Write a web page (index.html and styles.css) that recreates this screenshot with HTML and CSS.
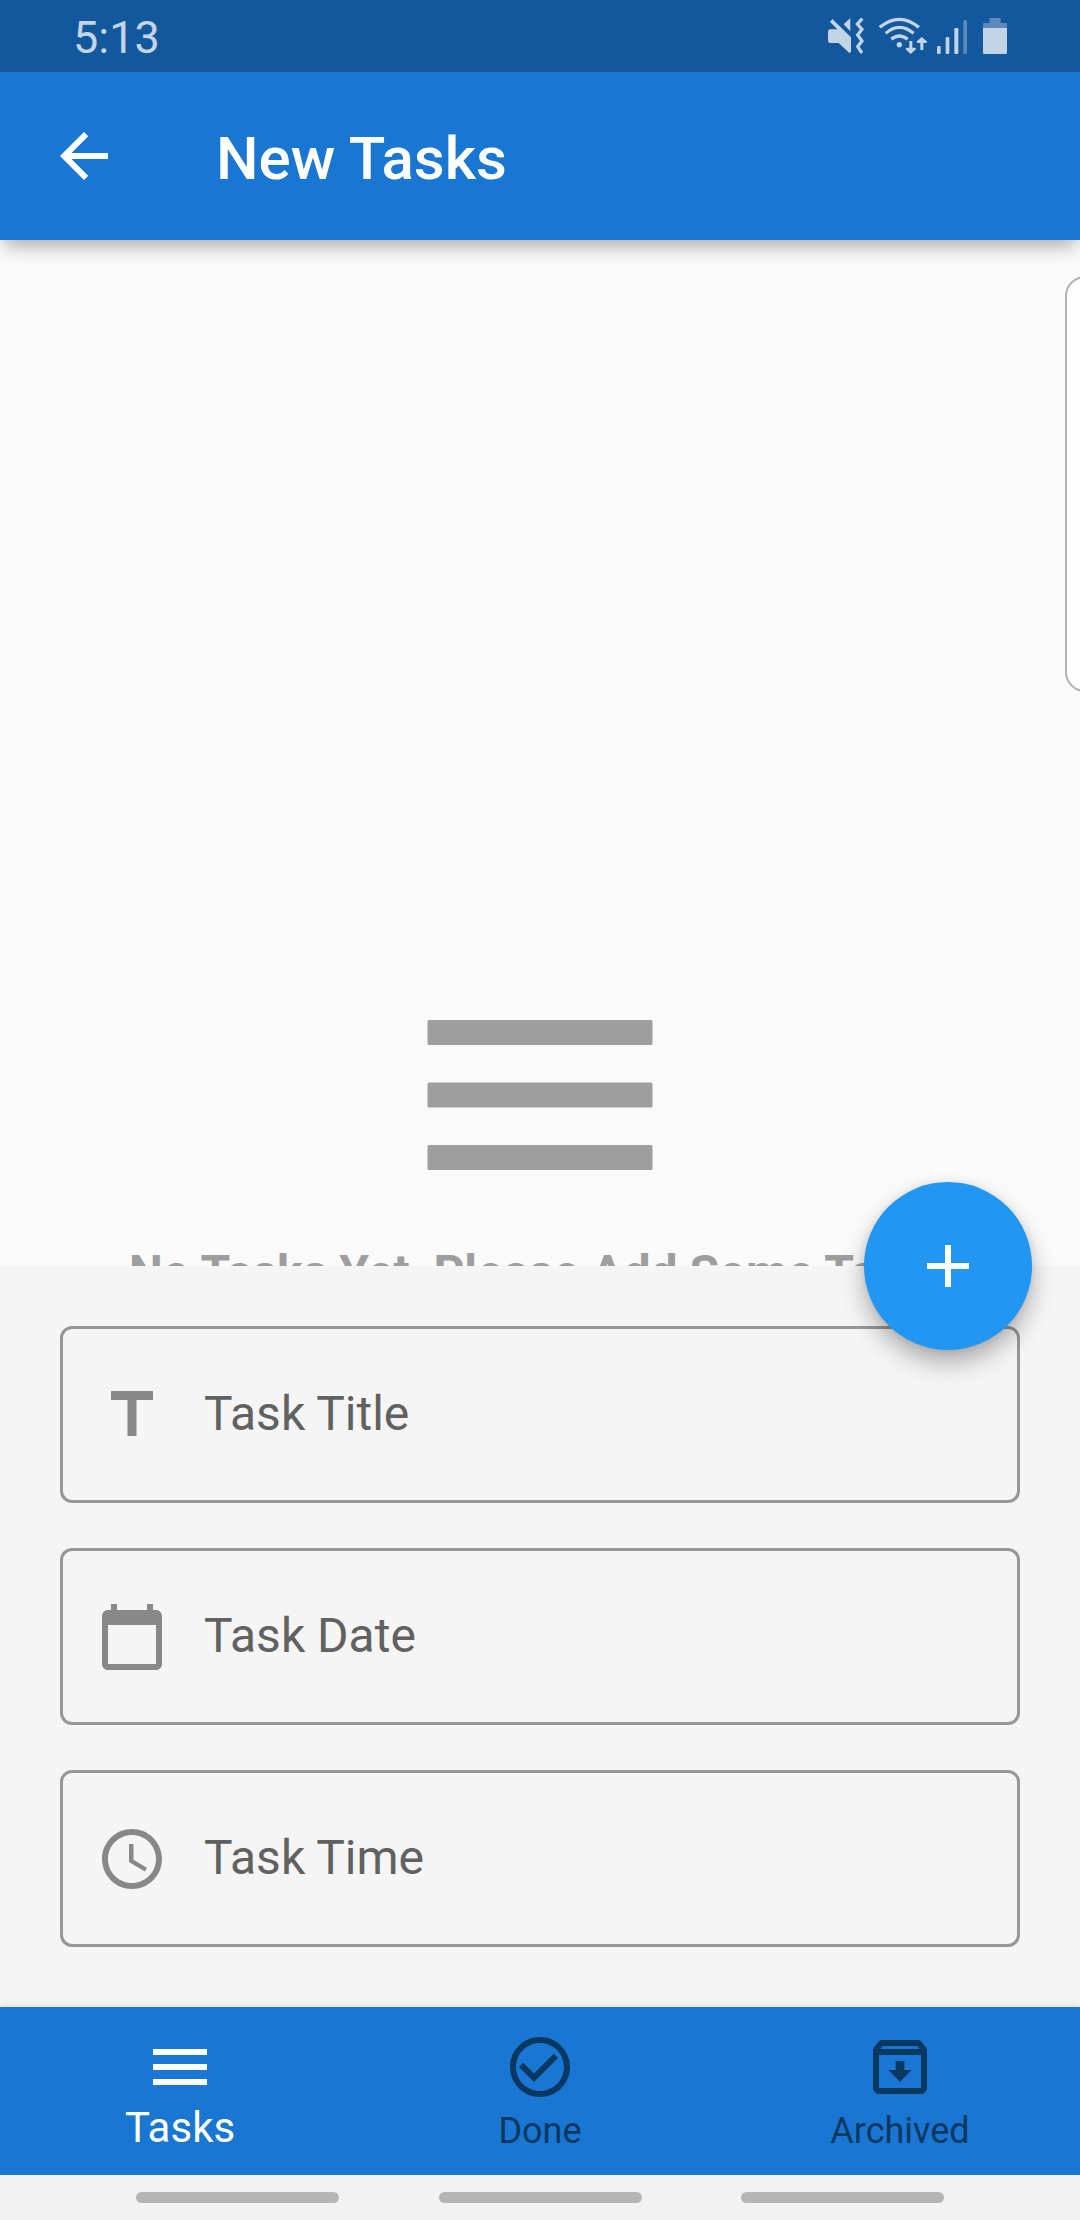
FILE: index.html
```html
<!DOCTYPE html>
<html lang="en">
<head>
<meta charset="utf-8">
<title>New Tasks</title>
<link rel="stylesheet" href="styles.css">
</head>
<body>
<div class="screen">
  <div class="status-bar">
    <span class="clock">5:13</span>
    <svg class="status-icons" viewBox="0 0 621 216">
      <path d="M97 57L153 112V156L148 159L116 129H91Q84 129 84 122V95Q84 88 91 88H112L90 66ZM151 54V94L131 73Z"/>
      <path class="line" d="M187 56L172 72L186 88L173 105L186 123L173 140L186 159"/>
      <circle cx="298" cy="134" r="8"/>
      <path class="line" d="M274 118Q298 98 323 118M257 100Q298 64 341 100M239 82Q298 34 357 82"/>
      <path d="M328 123h9v20h8l4 4-17 15-16-15 4-4h8ZM361 150v-21h-8l-4-4 16-14 17 14-4 4h-8v21Z"/>
      <rect x="411" y="138" width="11" height="24" rx="4"/>
      <rect x="437" y="111" width="11" height="51" rx="4"/>
      <rect x="463" y="84" width="12" height="78" rx="4"/>
      <rect class="dim" x="490" y="60" width="11" height="102" rx="4"/>
      <path class="dim" d="M549 84V73Q549 69 553 69H568V57Q568 54 571 54H599Q602 54 602 57V69H617Q621 69 621 73V84Z"/>
      <path d="M549 84H621V158Q621 162 617 162H553Q549 162 549 158Z"/>
    </svg>
  </div>

  <header class="app-bar">
    <svg class="icon" viewBox="0 0 24 24"><path d="M20 11H7.83l5.59-5.59L12 4l-8 8 8 8 1.41-1.41L7.83 13H20z"/></svg>
    <h1 class="title">New Tasks</h1>
  </header>

  <main class="body">
    <div class="edge-panel"></div>
    <svg class="empty-icon" viewBox="0 0 300 300">
      <rect x="37.5" y="75" width="225" height="25" rx="1.5"/>
      <rect x="37.5" y="137.5" width="225" height="25" rx="1.5"/>
      <rect x="37.5" y="200" width="225" height="25" rx="1.5"/>
    </svg>
    <p class="empty-text">No Tasks Yet, Please Add Some Tasks</p>
  </main>

  <section class="sheet">
    <button class="fab" aria-label="Add">
      <svg class="icon" viewBox="0 0 24 24"><path d="M19 13h-6v6h-2v-6H5v-2h6V5h2v6h6z"/></svg>
    </button>
    <div class="field">
      <svg class="icon" viewBox="0 0 24 24"><path d="M5 4v3h5.5v12h3V7H19V4z"/></svg>
      <span class="label">Task Title</span>
    </div>
    <div class="field">
      <svg class="icon" viewBox="0 0 24 24"><path d="M20 3h-1V1h-2v2H7V1H5v2H4c-1.1 0-2 .9-2 2v16c0 1.1.9 2 2 2h16c1.1 0 2-.9 2-2V5c0-1.1-.9-2-2-2zm0 18H4V8h16v13z"/></svg>
      <span class="label">Task Date</span>
    </div>
    <div class="field">
      <svg class="icon" viewBox="0 0 24 24"><path d="M11.99 2C6.47 2 2 6.48 2 12s4.47 10 9.99 10C17.52 22 22 17.52 22 12S17.52 2 11.99 2zM12 20c-4.42 0-8-3.58-8-8s3.58-8 8-8 8 3.58 8 8-3.58 8-8 8zM12.5 7H11v6l5.25 3.15.75-1.23-4.5-2.67z"/></svg>
      <span class="label">Task Time</span>
    </div>
  </section>

  <nav class="tabs">
    <div class="tab active">
      <svg class="icon" viewBox="0 0 24 24"><path d="M3 18h18v-2H3v2zm0-5h18v-2H3v2zm0-7v2h18V6H3z"/></svg>
      <span class="tab-label">Tasks</span>
    </div>
    <div class="tab">
      <svg class="icon" viewBox="0 0 24 24"><path d="M16.59 7.58L10 14.17l-3.59-3.58L5 12l5 5 8-8zM12 2C6.48 2 2 6.48 2 12s4.48 10 10 10 10-4.48 10-10S17.52 2 12 2zm0 18c-4.42 0-8-3.58-8-8s3.58-8 8-8 8 3.58 8 8-3.58 8-8 8z"/></svg>
      <span class="tab-label">Done</span>
    </div>
    <div class="tab">
      <svg class="icon" viewBox="0 0 24 24"><path d="M20.54 5.23l-1.39-1.68C18.88 3.21 18.47 3 18 3H6c-.47 0-.88.21-1.16.55L3.46 5.23C3.17 5.57 3 6.02 3 6.5V19c0 1.1.9 2 2 2h14c1.1 0 2-.9 2-2V6.5c0-.48-.17-.93-.46-1.27zM6.24 5h11.52l.83 1H5.42l.82-1zM5 19V8h14v11H5zm8.45-9h-2.9v3H8.1l3.9 3.9 3.9-3.9h-2.45z"/></svg>
      <span class="tab-label">Archived</span>
    </div>
  </nav>

  <div class="gesture-bar">
    <span class="pill"></span><span class="pill"></span><span class="pill"></span>
  </div>
</div>
</body>
</html>
```
FILE: styles.css
```css
* { box-sizing: border-box; }

body {
  margin: 0;
  font-family: Roboto, "Liberation Sans", sans-serif;
}

.screen {
  display: flex;
  flex-direction: column;
  width: 1080px;
  height: 2220px;
  overflow: hidden;
  background: #fafafa;
}

.icon {
  display: block;
  flex: none;
  width: 72px;
  height: 72px;
  fill: currentColor;
}

/* Status bar */
.status-bar {
  display: flex;
  justify-content: space-between;
  height: 72px;
  padding: 0 73px;
  background: #13589d;
  position: relative;
  z-index: 2;
}

.clock {
  font-size: 45px;
  line-height: 53px;
  padding-top: 11px;
  color: #c4d4e7;
}

.status-icons {
  width: 207px;
  height: 72px;
  fill: #c4d4e7;
}

.status-icons .line {
  fill: none;
  stroke: #c4d4e7;
  stroke-width: 9.5;
}

.status-icons .dim { fill: #5d8aba; }

/* App bar */
.app-bar {
  display: flex;
  align-items: center;
  gap: 96px;
  height: 168px;
  padding: 0 48px;
  background: #1976d2;
  color: #fff;
  position: relative;
  z-index: 1;
  box-shadow: 0 9px 18px -4px rgba(0, 0, 0, .34);
}

.title {
  margin: 0;
  font-size: 60px;
  font-weight: 500;
  line-height: 70px;
  padding-top: 5px;
}

/* Empty state */
.body {
  display: flex;
  flex-direction: column;
  align-items: center;
  height: 1026px;
  padding-top: 705px;
  overflow: hidden;
  position: relative;
}

.edge-panel {
  position: absolute;
  top: 36px;
  right: -30px;
  width: 45px;
  height: 416px;
  border: 2px solid #b3b3b3;
  border-radius: 20px;
  background: #fdfdfd;
}

.empty-icon {
  flex: none;
  width: 300px;
  height: 300px;
  fill: #9e9e9e;
}

.empty-text {
  margin: 0;
  font-size: 48px;
  font-weight: 700;
  line-height: 56px;
  white-space: nowrap;
  color: #9e9e9e;
}

/* Task form */
.sheet {
  display: flex;
  flex-direction: column;
  gap: 45px;
  height: 741px;
  padding: 60px;
  background: #f5f5f5;
  position: relative;
}

.fab {
  position: absolute;
  top: -84px;
  right: 48px;
  display: flex;
  align-items: center;
  justify-content: center;
  width: 168px;
  height: 168px;
  padding: 0;
  border: 0;
  border-radius: 50%;
  background: #2196f3;
  color: #fff;
  box-shadow: 0 13px 26px -2px rgba(0, 0, 0, .33), 0 0 8px rgba(0, 0, 0, .08);
}

.field {
  display: flex;
  gap: 36px;
  height: 177px;
  padding: 50px 33px;
  border: 3px solid #979797;
  border-radius: 12px;
  color: #888;
}

.label {
  font-size: 48px;
  line-height: 56px;
  padding-top: 7px;
  color: #616161;
}

/* Bottom navigation */
.tabs {
  display: flex;
  height: 168px;
  background: #1976d2;
  position: relative;
  box-shadow: 0 0 8px rgba(0, 0, 0, .12);
}

.tab {
  flex: 1;
  display: flex;
  flex-direction: column;
  align-items: center;
  padding-top: 24px;
  color: #0b3861;
}

.tab-label {
  font-size: 36px;
  line-height: 42px;
  padding-top: 7px;
}

.active { color: #fff; }

.active .tab-label {
  font-size: 42px;
  line-height: 48px;
  padding-top: 1px;
}

/* System gesture hints */
.gesture-bar {
  display: flex;
  justify-content: space-between;
  height: 45px;
  padding: 17px 136px 0;
  background: #f2f2f2;
  position: relative;
}

.pill {
  width: 203px;
  height: 11px;
  border-radius: 6px;
  background: #b5b5b5;
}
```
